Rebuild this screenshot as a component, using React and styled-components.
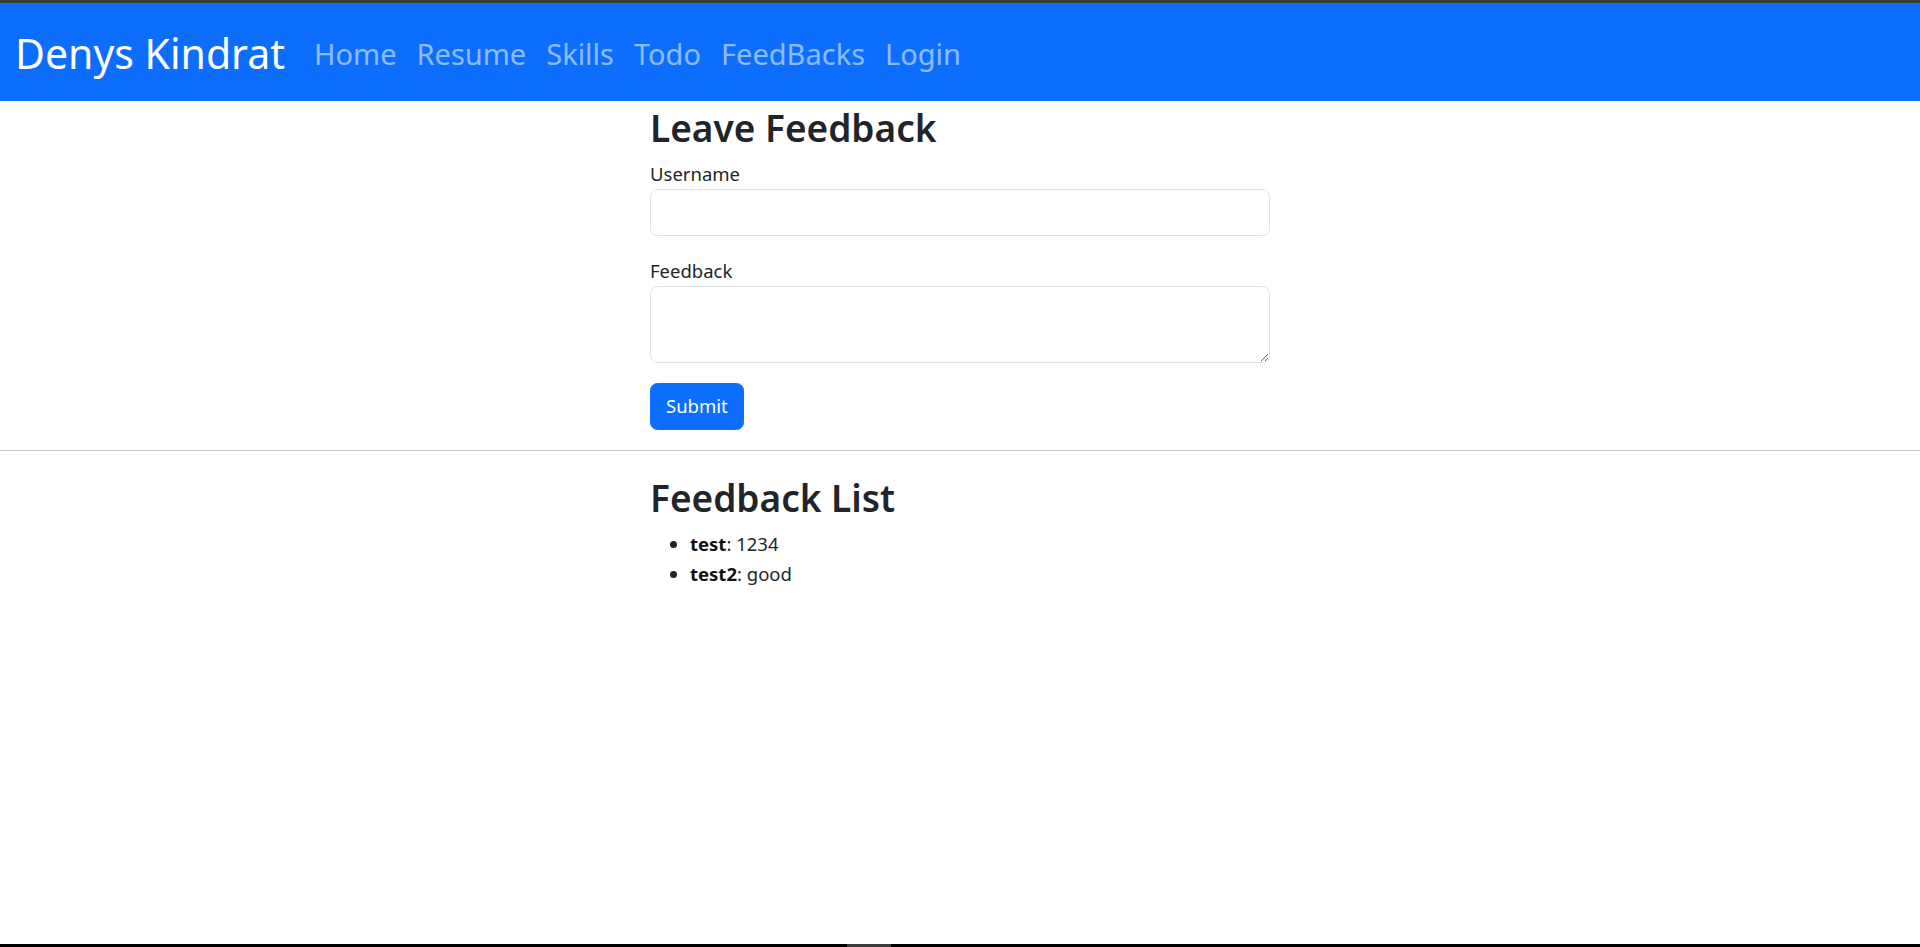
import React from 'react'
import styled, { createGlobalStyle } from 'styled-components'

const GlobalStyle = createGlobalStyle`
  html, body {
    margin: 0;
    padding: 0;
    background: #fff;
  }
  body {
    font-family: 'Noto Sans', 'Open Sans', sans-serif;
    font-size: 18.5px;
    line-height: 30px;
    color: #212529;
  }
  * {
    box-sizing: border-box;
  }
`

const feedbacks = [
  { id: 1, username: 'test', text: '1234' },
  { id: 2, username: 'test2', text: 'good' }
]

const links = ['Home', 'Resume', 'Skills', 'Todo', 'FeedBacks', 'Login']

const App = () => {
  return (
    <Page>
      <GlobalStyle />
      <Navbar>
        <Brand href="#">Denys Kindrat</Brand>
        <NavList>
          {links.map(link => (
            <NavItem key={link}>
              <NavLink href="#">{link}</NavLink>
            </NavItem>
          ))}
        </NavList>
      </Navbar>

      <Container>
        <Title>Leave Feedback</Title>
        <form onSubmit={e => e.preventDefault()}>
          <Field>
            <Label htmlFor="username">Username</Label>
            <Input id="username" type="text" />
          </Field>
          <Field>
            <Label htmlFor="feedback">Feedback</Label>
            <TextArea id="feedback" rows="2" />
          </Field>
          <SubmitButton type="submit">Submit</SubmitButton>
        </form>
      </Container>

      <Divider />

      <Container>
        <Title>Feedback List</Title>
        <List>
          {feedbacks.map(item => (
            <li key={item.id}>
              <strong>{item.username}</strong>: {item.text}
            </li>
          ))}
        </List>
      </Container>

      <BottomBar>
        <BarMark />
      </BottomBar>
    </Page>
  )
}

const Page = styled.div`
  min-height: 100vh;
  display: flex;
  flex-direction: column;
  border-top: 3px solid #3a3a3a;
`

const Navbar = styled.nav`
  display: flex;
  align-items: center;
  height: 97.5px;
  padding: 2px 15px 0;
  background: #0d6efd;
`

const Brand = styled.a`
  margin-right: 19px;
  font-size: 41px;
  line-height: 60px;
  color: #fff;
  text-decoration: none;
  white-space: nowrap;
`

const NavList = styled.ul`
  display: flex;
  margin: 0;
  padding: 0;
  list-style: none;
`

const NavItem = styled.li``

const NavLink = styled.a`
  display: block;
  padding: 2px 10px 0;
  font-size: 29px;
  line-height: 45px;
  color: rgba(255, 255, 255, 0.55);
  text-decoration: none;
`

const Container = styled.div`
  width: 620px;
  margin: 0 auto;
`

const Title = styled.h2`
  margin: 0 0 7px;
  padding-top: 3px;
  font-size: 37px;
  font-weight: 600;
  line-height: 48px;
  color: #212529;
`

const Field = styled.div`
  margin-bottom: 20px;
`

const Label = styled.label`
  display: inline-block;
`

const Input = styled.input`
  display: block;
  width: 100%;
  height: 47px;
  padding: 7px 15px;
  font: inherit;
  color: #212529;
  border: 1px solid #dee2e6;
  border-radius: 7.5px;
  outline: none;
`

const TextArea = styled.textarea`
  display: block;
  width: 100%;
  height: 77px;
  padding: 7px 15px;
  font: inherit;
  color: #212529;
  border: 1px solid #dee2e6;
  border-radius: 7.5px;
  outline: none;
  resize: vertical;
`

const SubmitButton = styled.button`
  display: inline-block;
  height: 47px;
  padding: 0 15px;
  font: inherit;
  color: #fff;
  background: #0d6efd;
  border: 1px solid #0d6efd;
  border-radius: 7.5px;
  cursor: pointer;
`

const Divider = styled.hr`
  margin: 20px 0;
  border: 0;
  border-top: 1px solid #c8c9ca;
`

const List = styled.ul`
  margin: 0;
  padding-left: 40px;

  strong {
    font-weight: 700;
    color: #111;
  }
`

const BottomBar = styled.div`
  margin-top: auto;
  height: 3px;
  background: #000;
  position: relative;
`

const BarMark = styled.span`
  position: absolute;
  left: 847px;
  top: 0;
  width: 44px;
  height: 3px;
  background: #3c3c3c;
`

export default App
